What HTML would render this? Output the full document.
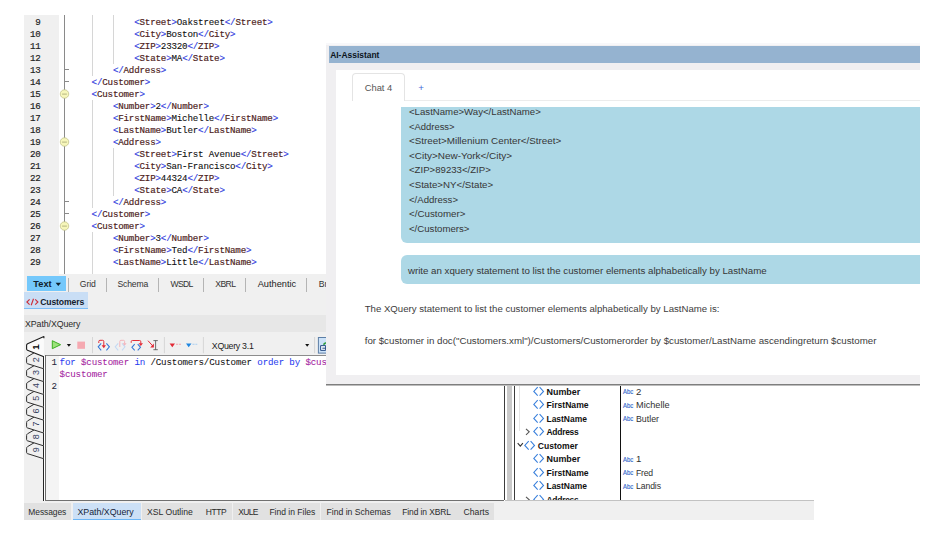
<!DOCTYPE html>
<html lang="en"><head><meta charset="utf-8"><title>XMLSpy AI-Assistant XQuery</title>
<style>
html,body{margin:0;padding:0;background:#fff;}
body{width:936px;height:535px;position:relative;overflow:hidden;font-family:"Liberation Sans", sans-serif;}
#app div,#app span.t,#app svg{position:absolute;}
#app span.t{white-space:pre;line-height:16px;height:16px;}
#app .m{font-family:"Liberation Mono", monospace;}
#app .b{color:#3644e0;}
#app .e{color:#4e1e22;}
#app .k{color:#2a3cf0;}
#app .v{color:#a3219e;}
#app .ln{color:#1e1e1e;}
#app span.m{letter-spacing:-0.19px;-webkit-text-stroke:0.18px;margin-top:0.8px;}
#app span.q{-webkit-text-stroke:0.05px;letter-spacing:-0.171px;}
#app .c{-webkit-text-stroke:0.1px;color:#111;}
</style></head><body><div id="app">
<div style="left:24.00px;top:15.20px;width:302.00px;height:258.40px;background:#fff;"></div>
<div style="left:24.00px;top:15.20px;width:34.80px;height:258.40px;background:#f0f0f0;"></div>
<div style="left:64.00px;top:15.20px;width:1.00px;height:258.40px;background:#8a8a8a;"></div>
<div style="left:64.50px;top:69.40px;width:4.20px;height:1.00px;background:#8a8a8a;"></div>
<div style="left:64.50px;top:81.40px;width:4.20px;height:1.00px;background:#8a8a8a;"></div>
<div style="left:64.50px;top:201.40px;width:4.20px;height:1.00px;background:#8a8a8a;"></div>
<div style="left:64.50px;top:213.40px;width:4.20px;height:1.00px;background:#8a8a8a;"></div>
<div style="left:91.70px;top:15.20px;width:1.20px;height:60.70px;background:#d6d6d6;"></div>
<div style="left:113.00px;top:15.20px;width:1.20px;height:48.70px;background:#d6d6d6;"></div>
<div style="left:91.70px;top:99.90px;width:1.20px;height:108.00px;background:#d6d6d6;"></div>
<div style="left:113.00px;top:147.90px;width:1.20px;height:48.00px;background:#d6d6d6;"></div>
<div style="left:91.70px;top:231.90px;width:1.20px;height:41.70px;background:#d6d6d6;"></div>
<svg style="left:59px;top:88.10px" width="12" height="12" viewBox="0 0 12 12"><circle cx="5.5" cy="6" r="4.25" fill="#f6f6ba" stroke="#bcbc84" stroke-width="0.7"/><path d="M3.1 6.1H7.9" stroke="#a4a474" stroke-width="0.8"/></svg>
<svg style="left:59px;top:136.10px" width="12" height="12" viewBox="0 0 12 12"><circle cx="5.5" cy="6" r="4.25" fill="#f6f6ba" stroke="#bcbc84" stroke-width="0.7"/><path d="M3.1 6.1H7.9" stroke="#a4a474" stroke-width="0.8"/></svg>
<svg style="left:59px;top:220.10px" width="12" height="12" viewBox="0 0 12 12"><circle cx="5.5" cy="6" r="4.25" fill="#f6f6ba" stroke="#bcbc84" stroke-width="0.7"/><path d="M3.1 6.1H7.9" stroke="#a4a474" stroke-width="0.8"/></svg>
<span class="t m" style="left:134.20px;top:13.90px;font-size:9.2px;color:#000;"><span class="b">&lt;</span><span class="e">Street</span><span class="b">&gt;</span><span class="c">Oakstreet</span><span class="b">&lt;/</span><span class="e">Street</span><span class="b">&gt;</span></span>
<span class="t m" style="left:35.29px;top:13.90px;font-size:9.2px;color:#1e1e1e;">9</span>
<span class="t m" style="left:134.20px;top:25.90px;font-size:9.2px;color:#000;"><span class="b">&lt;</span><span class="e">City</span><span class="b">&gt;</span><span class="c">Boston</span><span class="b">&lt;/</span><span class="e">City</span><span class="b">&gt;</span></span>
<span class="t m" style="left:29.98px;top:25.90px;font-size:9.2px;color:#1e1e1e;">10</span>
<span class="t m" style="left:134.20px;top:37.90px;font-size:9.2px;color:#000;"><span class="b">&lt;</span><span class="e">ZIP</span><span class="b">&gt;</span><span class="c">23320</span><span class="b">&lt;/</span><span class="e">ZIP</span><span class="b">&gt;</span></span>
<span class="t m" style="left:29.98px;top:37.90px;font-size:9.2px;color:#1e1e1e;">11</span>
<span class="t m" style="left:134.20px;top:49.90px;font-size:9.2px;color:#000;"><span class="b">&lt;</span><span class="e">State</span><span class="b">&gt;</span><span class="c">MA</span><span class="b">&lt;/</span><span class="e">State</span><span class="b">&gt;</span></span>
<span class="t m" style="left:29.98px;top:49.90px;font-size:9.2px;color:#1e1e1e;">12</span>
<span class="t m" style="left:112.90px;top:61.90px;font-size:9.2px;color:#000;"><span class="b">&lt;/</span><span class="e">Address</span><span class="b">&gt;</span></span>
<span class="t m" style="left:29.98px;top:61.90px;font-size:9.2px;color:#1e1e1e;">13</span>
<span class="t m" style="left:91.60px;top:73.90px;font-size:9.2px;color:#000;"><span class="b">&lt;/</span><span class="e">Customer</span><span class="b">&gt;</span></span>
<span class="t m" style="left:29.98px;top:73.90px;font-size:9.2px;color:#1e1e1e;">14</span>
<span class="t m" style="left:91.60px;top:85.90px;font-size:9.2px;color:#000;"><span class="b">&lt;</span><span class="e">Customer</span><span class="b">&gt;</span></span>
<span class="t m" style="left:29.98px;top:85.90px;font-size:9.2px;color:#1e1e1e;">15</span>
<span class="t m" style="left:112.90px;top:97.90px;font-size:9.2px;color:#000;"><span class="b">&lt;</span><span class="e">Number</span><span class="b">&gt;</span><span class="c">2</span><span class="b">&lt;/</span><span class="e">Number</span><span class="b">&gt;</span></span>
<span class="t m" style="left:29.98px;top:97.90px;font-size:9.2px;color:#1e1e1e;">16</span>
<span class="t m" style="left:112.90px;top:109.90px;font-size:9.2px;color:#000;"><span class="b">&lt;</span><span class="e">FirstName</span><span class="b">&gt;</span><span class="c">Michelle</span><span class="b">&lt;/</span><span class="e">FirstName</span><span class="b">&gt;</span></span>
<span class="t m" style="left:29.98px;top:109.90px;font-size:9.2px;color:#1e1e1e;">17</span>
<span class="t m" style="left:112.90px;top:121.90px;font-size:9.2px;color:#000;"><span class="b">&lt;</span><span class="e">LastName</span><span class="b">&gt;</span><span class="c">Butler</span><span class="b">&lt;/</span><span class="e">LastName</span><span class="b">&gt;</span></span>
<span class="t m" style="left:29.98px;top:121.90px;font-size:9.2px;color:#1e1e1e;">18</span>
<span class="t m" style="left:112.90px;top:133.90px;font-size:9.2px;color:#000;"><span class="b">&lt;</span><span class="e">Address</span><span class="b">&gt;</span></span>
<span class="t m" style="left:29.98px;top:133.90px;font-size:9.2px;color:#1e1e1e;">19</span>
<span class="t m" style="left:134.20px;top:145.90px;font-size:9.2px;color:#000;"><span class="b">&lt;</span><span class="e">Street</span><span class="b">&gt;</span><span class="c">First Avenue</span><span class="b">&lt;/</span><span class="e">Street</span><span class="b">&gt;</span></span>
<span class="t m" style="left:29.98px;top:145.90px;font-size:9.2px;color:#1e1e1e;">20</span>
<span class="t m" style="left:134.20px;top:157.90px;font-size:9.2px;color:#000;"><span class="b">&lt;</span><span class="e">City</span><span class="b">&gt;</span><span class="c">San-Francisco</span><span class="b">&lt;/</span><span class="e">City</span><span class="b">&gt;</span></span>
<span class="t m" style="left:29.98px;top:157.90px;font-size:9.2px;color:#1e1e1e;">21</span>
<span class="t m" style="left:134.20px;top:169.90px;font-size:9.2px;color:#000;"><span class="b">&lt;</span><span class="e">ZIP</span><span class="b">&gt;</span><span class="c">44324</span><span class="b">&lt;/</span><span class="e">ZIP</span><span class="b">&gt;</span></span>
<span class="t m" style="left:29.98px;top:169.90px;font-size:9.2px;color:#1e1e1e;">22</span>
<span class="t m" style="left:134.20px;top:181.90px;font-size:9.2px;color:#000;"><span class="b">&lt;</span><span class="e">State</span><span class="b">&gt;</span><span class="c">CA</span><span class="b">&lt;/</span><span class="e">State</span><span class="b">&gt;</span></span>
<span class="t m" style="left:29.98px;top:181.90px;font-size:9.2px;color:#1e1e1e;">23</span>
<span class="t m" style="left:112.90px;top:193.90px;font-size:9.2px;color:#000;"><span class="b">&lt;/</span><span class="e">Address</span><span class="b">&gt;</span></span>
<span class="t m" style="left:29.98px;top:193.90px;font-size:9.2px;color:#1e1e1e;">24</span>
<span class="t m" style="left:91.60px;top:205.90px;font-size:9.2px;color:#000;"><span class="b">&lt;/</span><span class="e">Customer</span><span class="b">&gt;</span></span>
<span class="t m" style="left:29.98px;top:205.90px;font-size:9.2px;color:#1e1e1e;">25</span>
<span class="t m" style="left:91.60px;top:217.90px;font-size:9.2px;color:#000;"><span class="b">&lt;</span><span class="e">Customer</span><span class="b">&gt;</span></span>
<span class="t m" style="left:29.98px;top:217.90px;font-size:9.2px;color:#1e1e1e;">26</span>
<span class="t m" style="left:112.90px;top:229.90px;font-size:9.2px;color:#000;"><span class="b">&lt;</span><span class="e">Number</span><span class="b">&gt;</span><span class="c">3</span><span class="b">&lt;/</span><span class="e">Number</span><span class="b">&gt;</span></span>
<span class="t m" style="left:29.98px;top:229.90px;font-size:9.2px;color:#1e1e1e;">27</span>
<span class="t m" style="left:112.90px;top:241.90px;font-size:9.2px;color:#000;"><span class="b">&lt;</span><span class="e">FirstName</span><span class="b">&gt;</span><span class="c">Ted</span><span class="b">&lt;/</span><span class="e">FirstName</span><span class="b">&gt;</span></span>
<span class="t m" style="left:29.98px;top:241.90px;font-size:9.2px;color:#1e1e1e;">28</span>
<span class="t m" style="left:112.90px;top:253.90px;font-size:9.2px;color:#000;"><span class="b">&lt;</span><span class="e">LastName</span><span class="b">&gt;</span><span class="c">Little</span><span class="b">&lt;/</span><span class="e">LastName</span><span class="b">&gt;</span></span>
<span class="t m" style="left:29.98px;top:253.90px;font-size:9.2px;color:#1e1e1e;">29</span>
<div style="left:24.00px;top:273.60px;width:302.00px;height:41.00px;background:#f0f0f0;"></div>
<div style="left:26.50px;top:276.20px;width:39.00px;height:14.60px;background:#74c8fb;"></div>
<span class="t" style="left:33.30px;top:275.90px;font-size:9.24px;color:#10202c;font-weight:bold;letter-spacing:-0.003px;">Text</span>
<svg style="left:54.6px;top:282.3px" width="7" height="5" viewBox="0 0 7 5"><path d="M0.6 0.8H6L3.3 3.9Z" fill="#10202c"/></svg>
<div style="left:68.20px;top:277.80px;width:1.00px;height:13.80px;background:#b4b4b4;"></div>
<div style="left:106.00px;top:277.80px;width:1.00px;height:13.80px;background:#b4b4b4;"></div>
<div style="left:158.00px;top:277.80px;width:1.00px;height:13.80px;background:#b4b4b4;"></div>
<div style="left:203.00px;top:277.80px;width:1.00px;height:13.80px;background:#b4b4b4;"></div>
<div style="left:245.00px;top:277.80px;width:1.00px;height:13.80px;background:#b4b4b4;"></div>
<div style="left:306.00px;top:277.80px;width:1.00px;height:13.80px;background:#b4b4b4;"></div>
<span class="t" style="left:79.80px;top:275.90px;font-size:8.64px;color:#333;letter-spacing:-0.099px;">Grid</span>
<span class="t" style="left:117.40px;top:275.90px;font-size:8.64px;color:#333;letter-spacing:-0.140px;">Schema</span>
<span class="t" style="left:170.40px;top:275.90px;font-size:8.64px;color:#333;letter-spacing:-0.630px;">WSDL</span>
<span class="t" style="left:215.30px;top:275.90px;font-size:8.64px;color:#333;letter-spacing:-0.633px;">XBRL</span>
<span class="t" style="left:257.70px;top:275.90px;font-size:9.24px;color:#1c1c1c;letter-spacing:-0.002px;">Authentic</span>
<span class="t" style="left:318.70px;top:275.90px;font-size:8.6px;color:#333;letter-spacing:0.003px;">Br</span>
<div style="left:24.00px;top:292.40px;width:64.00px;height:16.60px;background:#c9def5;"></div>
<div style="left:24.00px;top:308.00px;width:64.00px;height:1.00px;background:#7dbdf6;"></div>
<svg style="left:26px;top:297.6px" width="13" height="8" viewBox="0 0 13 8" fill="none" stroke="#cc2f3a" stroke-width="1.15"><path d="M3.6 1.4L0.9 4L3.6 6.6M9.2 1.4L11.9 4L9.2 6.6M7.5 0.8L5.2 7.2"/></svg>
<span class="t" style="left:40.20px;top:293.80px;font-size:8.64px;color:#14202c;font-weight:bold;letter-spacing:-0.129px;">Customers</span>
<div style="left:24.00px;top:314.60px;width:302.00px;height:17.40px;background:#e7e7e7;"></div>
<span class="t" style="left:25.00px;top:315.80px;font-size:8.82px;color:#2a2a2a;letter-spacing:-0.087px;">XPath/XQuery</span>
<div style="left:24.00px;top:332.00px;width:302.00px;height:24.00px;background:#f0f0f0;"></div>
<div style="left:24.00px;top:355.00px;width:20.00px;height:146.00px;background:#f0f0f0;"></div>
<div style="left:44.50px;top:355.00px;width:460.00px;height:145.50px;background:#fff;"></div>
<div style="left:46.00px;top:356.00px;width:12.80px;height:144.50px;background:#f4f4f4;"></div>
<div style="left:45.00px;top:355.00px;width:281.00px;height:1.00px;background:#8c8c8c;"></div>
<div style="left:43.00px;top:356.00px;width:1.00px;height:144.60px;background:#262626;"></div>
<div style="left:45.00px;top:355.00px;width:1.00px;height:146.00px;background:#6c6c6c;"></div>
<svg style="left:24px;top:332px" width="22" height="130" viewBox="24 332 22 130"><path d="M34.3 442.65L27.5 446.65Q26.6 447.25 26.6 448.25L26.6 452.45Q26.6 453.35 27.5 453.65L43.8 458.75" fill="#f0f0f0" stroke="#303030" stroke-width="1" stroke-linejoin="round"/><path d="M34.3 429.80L27.5 433.80Q26.6 434.40 26.6 435.40L26.6 439.60Q26.6 440.50 27.5 440.80L43.8 445.90" fill="#f0f0f0" stroke="#303030" stroke-width="1" stroke-linejoin="round"/><path d="M34.3 416.95L27.5 420.95Q26.6 421.55 26.6 422.55L26.6 426.75Q26.6 427.65 27.5 427.95L43.8 433.05" fill="#f0f0f0" stroke="#303030" stroke-width="1" stroke-linejoin="round"/><path d="M34.3 404.10L27.5 408.10Q26.6 408.70 26.6 409.70L26.6 413.90Q26.6 414.80 27.5 415.10L43.8 420.20" fill="#f0f0f0" stroke="#303030" stroke-width="1" stroke-linejoin="round"/><path d="M34.3 391.25L27.5 395.25Q26.6 395.85 26.6 396.85L26.6 401.05Q26.6 401.95 27.5 402.25L43.8 407.35" fill="#f0f0f0" stroke="#303030" stroke-width="1" stroke-linejoin="round"/><path d="M34.3 378.40L27.5 382.40Q26.6 383.00 26.6 384.00L26.6 388.20Q26.6 389.10 27.5 389.40L43.8 394.50" fill="#f0f0f0" stroke="#303030" stroke-width="1" stroke-linejoin="round"/><path d="M34.3 365.55L27.5 369.55Q26.6 370.15 26.6 371.15L26.6 375.35Q26.6 376.25 27.5 376.55L43.8 381.65" fill="#f0f0f0" stroke="#303030" stroke-width="1" stroke-linejoin="round"/><path d="M34.3 352.70L27.5 356.70Q26.6 357.30 26.6 358.30L26.6 362.50Q26.6 363.40 27.5 363.70L43.8 368.80" fill="#f0f0f0" stroke="#303030" stroke-width="1" stroke-linejoin="round"/><path d="M43.9 338.2L43.9 336.6L27.6 343.7Q26.6 344.2 26.6 345.2L26.6 349Q26.6 349.9 27.5 350.2L43.9 356.7Z" fill="#fbfbfb" stroke="none"/><path d="M43.9 338.2L43.9 336.6L27.6 343.7Q26.6 344.2 26.6 345.2L26.6 349Q26.6 349.9 27.5 350.2L43.9 356.7" fill="none" stroke="#1c1c1c" stroke-width="1.1" stroke-linejoin="round"/><text x="0" y="0" transform="translate(39.1 347.00) rotate(-90)" text-anchor="middle" font-family='"Liberation Sans", sans-serif' font-size="9.8" font-weight="bold" fill="#000">1</text><text x="0" y="0" transform="translate(39.0 359.70) rotate(-90)" text-anchor="middle" font-family='"Liberation Sans", sans-serif' font-size="9.0" font-weight="normal" fill="#34405e">2</text><text x="0" y="0" transform="translate(39.0 372.55) rotate(-90)" text-anchor="middle" font-family='"Liberation Sans", sans-serif' font-size="9.0" font-weight="normal" fill="#34405e">3</text><text x="0" y="0" transform="translate(39.0 385.40) rotate(-90)" text-anchor="middle" font-family='"Liberation Sans", sans-serif' font-size="9.0" font-weight="normal" fill="#34405e">4</text><text x="0" y="0" transform="translate(39.0 398.25) rotate(-90)" text-anchor="middle" font-family='"Liberation Sans", sans-serif' font-size="9.0" font-weight="normal" fill="#34405e">5</text><text x="0" y="0" transform="translate(39.0 411.10) rotate(-90)" text-anchor="middle" font-family='"Liberation Sans", sans-serif' font-size="9.0" font-weight="normal" fill="#34405e">6</text><text x="0" y="0" transform="translate(39.0 423.95) rotate(-90)" text-anchor="middle" font-family='"Liberation Sans", sans-serif' font-size="9.0" font-weight="normal" fill="#34405e">7</text><text x="0" y="0" transform="translate(39.0 436.80) rotate(-90)" text-anchor="middle" font-family='"Liberation Sans", sans-serif' font-size="9.0" font-weight="normal" fill="#34405e">8</text><text x="0" y="0" transform="translate(39.0 449.65) rotate(-90)" text-anchor="middle" font-family='"Liberation Sans", sans-serif' font-size="9.0" font-weight="normal" fill="#34405e">9</text></svg>
<svg style="left:44px;top:332px" width="282" height="24" viewBox="44 332 282 24" fill="none"><path d="M52.3 340.7L60.6 344.7L52.3 348.7Z" fill="#9be27a" stroke="#3cae24" stroke-width="1" stroke-linejoin="round"/><path d="M66.8 344H71L68.9 346.8Z" fill="#111"/><rect x="77.3" y="341.6" width="7.7" height="7.2" fill="#f5a9b1"/><path d="M92.5 337V353.2" stroke="#d6d6d6" stroke-width="1"/><path d="M164.4 337V353.2" stroke="#d6d6d6" stroke-width="1"/><path d="M203.4 337V353.2" stroke="#d6d6d6" stroke-width="1"/><path d="M314.6 337V353.2" stroke="#d6d6d6" stroke-width="1"/><path d="M101.2 343.3L98.2 346.8L101.2 350.3M106.4 343.3L109.4 346.8L106.4 350.3" stroke="#3478d8" stroke-width="1.05"/><path d="M98.8 343V341.4Q98.8 340.3 100 340.3H102.6Q103.8 340.3 103.8 341.5V346.2" stroke="#e22a36" stroke-width="1"/><path d="M101.6 345.2H106L103.8 348.2Z" fill="#e22a36"/><path d="M118.2 343.3L115.2 346.8L118.2 350.3M122.0 343.3L125.0 346.8L122.0 350.3" stroke="#c3d9f3" stroke-width="1.05"/><path d="M119.8 347V341.4Q119.8 340.3 121 340.3H123.4Q124.6 340.3 124.6 341.5V343.6" stroke="#f3b4bb" stroke-width="1"/><path d="M122.6 343.2H126.6L124.6 345.8Z" fill="#f3b4bb"/><path d="M134.7 344.2L131.9 347.3L134.7 350.4M137.7 344.2L140.5 347.3L137.7 350.4" stroke="#3478d8" stroke-width="1.05"/><path d="M131.2 342.8V341.6Q131.2 340.5 132.4 340.5H139.6Q140.8 340.5 140.8 341.7V343.6" stroke="#e22a36" stroke-width="1"/><path d="M138.6 343.2H143L140.8 346Z" fill="#e22a36"/><path d="M148 340.7L152.8 346" stroke="#e22a36" stroke-width="1"/><path d="M153.9 343.6V347.4H150.2Z" fill="#e22a36"/><path d="M153.4 340.6H157.8M153.4 349.7H157.8M155.6 340.6V349.7" stroke="#565656" stroke-width="0.85"/><path d="M169.6 343.5H175L172.3 347.2Z" fill="#e22a36"/><path d="M176 344.2H178.2M179 344.2H181" stroke="#f0a6ae" stroke-width="1.05"/><path d="M186 343.5H191.5L188.7 347.2Z" fill="#1f86e0"/><path d="M192.4 344.2H194.6M195.4 344.2H197.3" stroke="#a8cdf0" stroke-width="1.05"/><path d="M305.2 344H309.3L307.2 346.8Z" fill="#111"/><rect x="318.4" y="337.5" width="10" height="15.6" fill="#cce2f8" stroke="#5c7ea6" stroke-width="1"/><path d="M320.6 345.6H325.6V350.4H320.6Z" stroke="#2a4f88" stroke-width="1" fill="#eef4fb"/><path d="M323.4 344.6L325.8 342.6" stroke="#2a9a38" stroke-width="1.5"/><path d="M322.4 348.2H326" stroke="#2a4f88" stroke-width="1"/></svg>
<span class="t" style="left:211.80px;top:337.80px;font-size:8.82px;color:#222;letter-spacing:-0.288px;">XQuery 3.1</span>
<span class="t m q" style="left:51.40px;top:354.00px;font-size:9.2px;color:#1c2438;">1</span>
<span class="t m q" style="left:59.60px;top:354.00px;font-size:9.2px;color:#111;"><span class="k">for</span> <span class="v">$customer</span> <span class="k">in</span> /Customers/Customer <span class="k">order by</span> <span class="v">$customer/LastName</span></span>
<span class="t m q" style="left:59.60px;top:366.20px;font-size:9.2px;color:#111;"><span class="v">$customer</span></span>
<span class="t m q" style="left:51.40px;top:378.00px;font-size:9.2px;color:#1c2438;">2</span>
<div style="left:24.00px;top:500.60px;width:789.60px;height:19.00px;background:#f0f0f0;"></div>
<div style="left:45.00px;top:500.00px;width:460.00px;height:1.00px;background:#707070;"></div>
<div style="left:24.00px;top:503.20px;width:47.40px;height:16.40px;background:#e1e1e1;"></div>
<span class="t" style="left:28.30px;top:504.30px;font-size:8.46px;color:#2b2b2b;letter-spacing:-0.079px;">Messages</span>
<div style="left:73.00px;top:503.20px;width:68.20px;height:16.40px;background:#cce0f6;"></div>
<div style="left:73.00px;top:518.60px;width:68.20px;height:1.00px;background:#6cb6f6;"></div>
<span class="t" style="left:77.40px;top:504.30px;font-size:8.83px;color:#15253a;letter-spacing:-0.011px;">XPath/XQuery</span>
<div style="left:141.60px;top:503.20px;width:58.40px;height:16.40px;background:#e1e1e1;"></div>
<span class="t" style="left:147.10px;top:504.30px;font-size:8.65px;color:#2b2b2b;letter-spacing:-0.002px;">XSL Outline</span>
<div style="left:200.40px;top:503.20px;width:32.00px;height:16.40px;background:#e1e1e1;"></div>
<span class="t" style="left:205.80px;top:504.30px;font-size:8.46px;color:#2b2b2b;letter-spacing:-0.395px;">HTTP</span>
<div style="left:232.80px;top:503.20px;width:30.80px;height:16.40px;background:#e1e1e1;"></div>
<span class="t" style="left:238.20px;top:504.30px;font-size:8.46px;color:#2b2b2b;letter-spacing:-0.623px;">XULE</span>
<div style="left:264.00px;top:503.20px;width:56.40px;height:16.40px;background:#e1e1e1;"></div>
<span class="t" style="left:269.40px;top:504.30px;font-size:8.55px;color:#2b2b2b;letter-spacing:-0.006px;">Find in Files</span>
<div style="left:320.80px;top:503.20px;width:75.10px;height:16.40px;background:#e1e1e1;"></div>
<span class="t" style="left:326.60px;top:504.30px;font-size:8.63px;color:#2b2b2b;letter-spacing:-0.010px;">Find in Schemas</span>
<div style="left:396.30px;top:503.20px;width:60.70px;height:16.40px;background:#e1e1e1;"></div>
<span class="t" style="left:402.20px;top:504.30px;font-size:8.46px;color:#2b2b2b;letter-spacing:-0.084px;">Find in XBRL</span>
<div style="left:457.40px;top:503.20px;width:36.90px;height:16.40px;background:#e1e1e1;"></div>
<span class="t" style="left:463.60px;top:504.30px;font-size:8.64px;color:#2b2b2b;letter-spacing:-0.001px;">Charts</span>
<div style="left:504.00px;top:385.00px;width:416.00px;height:115.60px;background:#fff;"></div>
<div style="left:504.00px;top:385.00px;width:1.00px;height:115.40px;background:#3c3c3c;"></div>
<div style="left:506.90px;top:385.00px;width:5.40px;height:115.60px;background:#c9c9c9;"></div>
<div style="left:514.00px;top:385.00px;width:1.00px;height:115.60px;background:#3c3c3c;"></div>
<div style="left:519.20px;top:385.00px;width:0.90px;height:46.20px;background:#e4e4e4;"></div>
<div style="left:620.00px;top:385.00px;width:1.00px;height:115.60px;background:#111;"></div>
<svg style="left:532.50px;top:385.80px" width="12.0" height="10.8" viewBox="0 0 12.0 10.8" fill="none"><path d="M4.7 1.1L0.8 5.40L4.7 9.700000000000001M6.6 1.1L10.5 5.40L6.6 9.700000000000001" stroke="#3a80dc" stroke-width="1.1"/></svg>
<span class="t" style="left:546.50px;top:383.50px;font-size:8.94px;color:#111;font-weight:bold;letter-spacing:-0.003px;">Number</span>
<span class="t" style="left:622.60px;top:384.10px;font-size:7.6px;color:#3a6ccc;transform:scaleX(.78);transform-origin:0 50%;-webkit-text-stroke:0.2px;">Abc</span>
<span class="t" style="left:636.00px;top:383.50px;font-size:9.6px;color:#303030;">2</span>
<svg style="left:532.50px;top:399.32px" width="12.0" height="10.8" viewBox="0 0 12.0 10.8" fill="none"><path d="M4.7 1.1L0.8 5.40L4.7 9.700000000000001M6.6 1.1L10.5 5.40L6.6 9.700000000000001" stroke="#3a80dc" stroke-width="1.1"/></svg>
<span class="t" style="left:546.50px;top:397.02px;font-size:8.63px;color:#111;font-weight:bold;letter-spacing:-0.010px;">FirstName</span>
<span class="t" style="left:622.60px;top:397.62px;font-size:7.6px;color:#3a6ccc;transform:scaleX(.78);transform-origin:0 50%;-webkit-text-stroke:0.2px;">Abc</span>
<span class="t" style="left:636.00px;top:397.02px;font-size:9.16px;color:#303030;letter-spacing:0.001px;">Michelle</span>
<svg style="left:532.50px;top:412.84px" width="12.0" height="10.8" viewBox="0 0 12.0 10.8" fill="none"><path d="M4.7 1.1L0.8 5.40L4.7 9.700000000000001M6.6 1.1L10.5 5.40L6.6 9.700000000000001" stroke="#3a80dc" stroke-width="1.1"/></svg>
<span class="t" style="left:546.50px;top:410.54px;font-size:8.47px;color:#111;font-weight:bold;letter-spacing:-0.011px;">LastName</span>
<span class="t" style="left:622.60px;top:411.14px;font-size:7.6px;color:#3a6ccc;transform:scaleX(.78);transform-origin:0 50%;-webkit-text-stroke:0.2px;">Abc</span>
<span class="t" style="left:636.00px;top:410.54px;font-size:8.81px;color:#303030;letter-spacing:0.003px;">Butler</span>
<svg style="left:532.50px;top:426.36px" width="12.0" height="10.8" viewBox="0 0 12.0 10.8" fill="none"><path d="M4.7 1.1L0.8 5.40L4.7 9.700000000000001M6.6 1.1L10.5 5.40L6.6 9.700000000000001" stroke="#3a80dc" stroke-width="1.1"/></svg>
<span class="t" style="left:546.50px;top:424.06px;font-size:8.46px;color:#111;font-weight:bold;letter-spacing:-0.261px;">Address</span>
<svg style="left:525px;top:428.16px" width="6" height="8" viewBox="0 0 6 8" fill="none"><path d="M1 0.8L4.2 3.8L1 6.8" stroke="#555" stroke-width="1.1"/></svg>
<svg style="left:524.40px;top:439.88px" width="12.0" height="10.8" viewBox="0 0 12.0 10.8" fill="none"><path d="M4.7 1.1L0.8 5.40L4.7 9.700000000000001M6.6 1.1L10.5 5.40L6.6 9.700000000000001" stroke="#3a80dc" stroke-width="1.1"/></svg>
<span class="t" style="left:537.80px;top:437.58px;font-size:8.59px;color:#111;font-weight:bold;letter-spacing:-0.006px;">Customer</span>
<svg style="left:517px;top:442.08px" width="7" height="6" viewBox="0 0 7 6" fill="none"><path d="M0.7 1.2L3.3 4.2L5.9 1.2" stroke="#333" stroke-width="1.1"/></svg>
<svg style="left:532.50px;top:453.40px" width="12.0" height="10.8" viewBox="0 0 12.0 10.8" fill="none"><path d="M4.7 1.1L0.8 5.40L4.7 9.700000000000001M6.6 1.1L10.5 5.40L6.6 9.700000000000001" stroke="#3a80dc" stroke-width="1.1"/></svg>
<span class="t" style="left:546.50px;top:451.10px;font-size:8.94px;color:#111;font-weight:bold;letter-spacing:-0.003px;">Number</span>
<span class="t" style="left:622.60px;top:451.70px;font-size:7.6px;color:#3a6ccc;transform:scaleX(.78);transform-origin:0 50%;-webkit-text-stroke:0.2px;">Abc</span>
<span class="t" style="left:636.00px;top:451.10px;font-size:9.6px;color:#303030;">1</span>
<svg style="left:532.50px;top:466.92px" width="12.0" height="10.8" viewBox="0 0 12.0 10.8" fill="none"><path d="M4.7 1.1L0.8 5.40L4.7 9.700000000000001M6.6 1.1L10.5 5.40L6.6 9.700000000000001" stroke="#3a80dc" stroke-width="1.1"/></svg>
<span class="t" style="left:546.50px;top:464.62px;font-size:8.63px;color:#111;font-weight:bold;letter-spacing:-0.010px;">FirstName</span>
<span class="t" style="left:622.60px;top:465.22px;font-size:7.6px;color:#3a6ccc;transform:scaleX(.78);transform-origin:0 50%;-webkit-text-stroke:0.2px;">Abc</span>
<span class="t" style="left:636.00px;top:464.62px;font-size:8.64px;color:#303030;letter-spacing:-0.209px;">Fred</span>
<svg style="left:532.50px;top:480.44px" width="12.0" height="10.8" viewBox="0 0 12.0 10.8" fill="none"><path d="M4.7 1.1L0.8 5.40L4.7 9.700000000000001M6.6 1.1L10.5 5.40L6.6 9.700000000000001" stroke="#3a80dc" stroke-width="1.1"/></svg>
<span class="t" style="left:546.50px;top:478.14px;font-size:8.47px;color:#111;font-weight:bold;letter-spacing:-0.011px;">LastName</span>
<span class="t" style="left:622.60px;top:478.74px;font-size:7.6px;color:#3a6ccc;transform:scaleX(.78);transform-origin:0 50%;-webkit-text-stroke:0.2px;">Abc</span>
<span class="t" style="left:636.00px;top:478.14px;font-size:8.64px;color:#303030;letter-spacing:-0.087px;">Landis</span>
<svg style="left:532.50px;top:493.96px" width="12.0" height="10.8" viewBox="0 0 12.0 10.8" fill="none"><path d="M4.7 1.1L0.8 5.40L4.7 9.700000000000001M6.6 1.1L10.5 5.40L6.6 9.700000000000001" stroke="#3a80dc" stroke-width="1.1"/></svg>
<span class="t" style="left:546.50px;top:491.66px;font-size:8.46px;color:#111;font-weight:bold;letter-spacing:-0.261px;">Address</span>
<svg style="left:525px;top:495.76px" width="6" height="8" viewBox="0 0 6 8" fill="none"><path d="M1 0.8L4.2 3.8L1 6.8" stroke="#555" stroke-width="1.1"/></svg>
<div style="left:504.00px;top:500.60px;width:309.60px;height:19.00px;background:#f0f0f0;"></div>
<div style="left:505.00px;top:500.00px;width:308.60px;height:1.00px;background:#c2c2c2;"></div>
<div style="left:813.60px;top:500.20px;width:122.40px;height:35.00px;background:#fff;"></div>
<div style="left:0.00px;top:519.60px;width:936.00px;height:16.00px;background:#fff;"></div>
<div style="left:326.00px;top:43.40px;width:594.00px;height:2.00px;background:#f8f8fa;"></div>
<div style="left:326.00px;top:45.20px;width:594.00px;height:339.00px;background:#f0eff1;"></div>
<div style="left:326.00px;top:384.00px;width:594.00px;height:1.00px;background:#7e7e7e;"></div>
<div style="left:326.00px;top:385.00px;width:594.00px;height:1.00px;background:#bdbdbd;"></div>
<div style="left:329.00px;top:45.60px;width:591.00px;height:17.30px;background:#95b3d0;"></div>
<span class="t" style="left:330.20px;top:46.90px;font-size:8.46px;color:#0c1420;font-weight:bold;letter-spacing:-0.011px;">AI-Assistant</span>
<div style="left:336.00px;top:69.60px;width:584.00px;height:305.30px;background:#fff;"></div>
<div style="left:352.20px;top:100.00px;width:567.80px;height:1.00px;background:#ececec;"></div>
<div style="left:352px;top:73px;width:50.8px;height:27px;background:#fff;border:1px solid #e4e4e4;border-bottom:none;border-radius:4px 4px 0 0;"></div>
<span class="t" style="left:364.70px;top:79.80px;font-size:9.37px;color:#555;letter-spacing:0.004px;">Chat 4</span>
<span class="t" style="left:418.20px;top:80.10px;font-size:9.8px;color:#4468d8;">+</span>
<div style="left:400.8px;top:106.6px;width:519.2px;height:136.2px;background:#add8e6;border-radius:0 0 0 6px;"></div>
<span class="t" style="left:409.00px;top:103.90px;font-size:9.64px;color:#363636;letter-spacing:0.000px;">&lt;LastName&gt;Way&lt;/LastName&gt;</span>
<span class="t" style="left:409.00px;top:118.50px;font-size:9.44px;color:#363636;letter-spacing:0.002px;">&lt;Address&gt;</span>
<span class="t" style="left:409.00px;top:133.10px;font-size:9.86px;color:#363636;letter-spacing:0.003px;">&lt;Street&gt;Millenium Center&lt;/Street&gt;</span>
<span class="t" style="left:409.00px;top:147.70px;font-size:9.96px;color:#363636;letter-spacing:-0.004px;">&lt;City&gt;New-York&lt;/City&gt;</span>
<span class="t" style="left:409.00px;top:162.30px;font-size:9.63px;color:#363636;letter-spacing:-0.005px;">&lt;ZIP&gt;89233&lt;/ZIP&gt;</span>
<span class="t" style="left:409.00px;top:176.90px;font-size:9.72px;color:#363636;letter-spacing:-0.006px;">&lt;State&gt;NY&lt;/State&gt;</span>
<span class="t" style="left:409.00px;top:191.50px;font-size:9.59px;color:#363636;letter-spacing:0.000px;">&lt;/Address&gt;</span>
<span class="t" style="left:409.00px;top:206.10px;font-size:9.77px;color:#363636;letter-spacing:-0.005px;">&lt;/Customer&gt;</span>
<span class="t" style="left:409.00px;top:220.70px;font-size:9.63px;color:#363636;letter-spacing:-0.004px;">&lt;/Customers&gt;</span>
<div style="left:400.8px;top:255.2px;width:519.2px;height:29.0px;background:#add8e6;border-radius:6px 0 0 6px;"></div>
<span class="t" style="left:407.90px;top:262.50px;font-size:9.72px;color:#363636;letter-spacing:-0.005px;">write an xquery statement to list the customer elements alphabetically by LastName</span>
<span class="t" style="left:364.70px;top:300.60px;font-size:9.64px;color:#3c3c3c;letter-spacing:0.001px;">The XQuery statement to list the customer elements alphabetically by LastName is:</span>
<span class="t" style="left:364.70px;top:333.30px;font-size:9.73px;color:#3c3c3c;letter-spacing:-0.002px;">for $customer in doc(&quot;Customers.xml&quot;)/Customers/Customerorder by $customer/LastName ascendingreturn $customer</span>
</div></body></html>
